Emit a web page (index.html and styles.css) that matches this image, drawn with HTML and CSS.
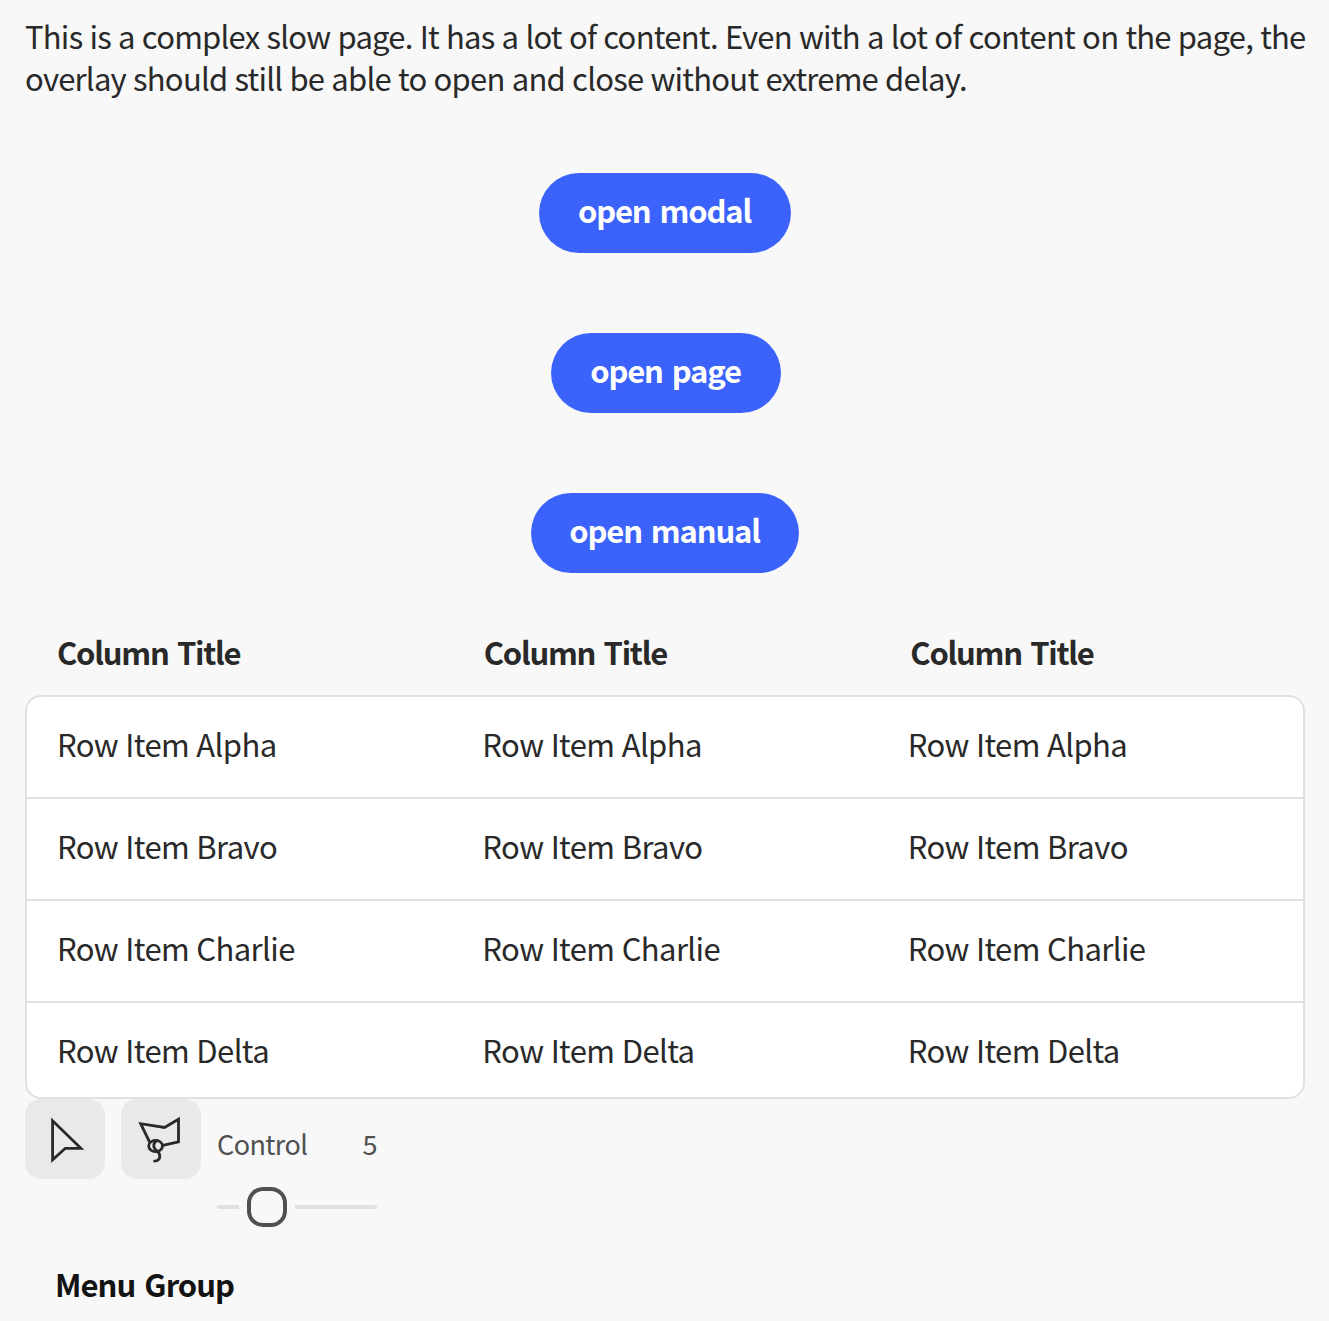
FILE: index.html
```html
<!DOCTYPE html>
<html lang="en">
<head>
<meta charset="utf-8">
<title>Complex slow page</title>
<link rel="stylesheet" href="styles.css">
</head>
<body>
<main class="page">
  <p class="intro"><span class="intro-line">This is a complex slow page. It has a lot of content. Even with a lot of content on the page, the</span> <span class="intro-line">overlay should still be able to open and close without extreme delay.</span></p>
  <div class="actions">
    <button class="button button-modal">open modal</button>
    <button class="button button-page">open page</button>
    <button class="button button-manual">open manual</button>
  </div>
  <section class="table">
    <div class="table-head"><span>Column Title</span><span>Column Title</span><span>Column Title</span></div>
    <div class="table-body">
      <div class="table-row"><span>Row Item Alpha</span><span>Row Item Alpha</span><span>Row Item Alpha</span></div>
      <div class="table-row"><span>Row Item Bravo</span><span>Row Item Bravo</span><span>Row Item Bravo</span></div>
      <div class="table-row"><span>Row Item Charlie</span><span>Row Item Charlie</span><span>Row Item Charlie</span></div>
      <div class="table-row"><span>Row Item Delta</span><span>Row Item Delta</span><span>Row Item Delta</span></div>
    </div>
  </section>
  <div class="tools">
    <button class="tool" aria-label="Select"><svg viewBox="0 0 80 80"><path d="M27.6 21.8V60.9L40.3 49.3H55.9Z"/></svg></button>
    <button class="tool" aria-label="Lasso"><svg viewBox="0 0 80 80"><path d="M28.6 43.2 19.7 24.7l23.8 3.8L57.5 20.3v22.6L41.8 46.4"/><ellipse cx="34.6" cy="47" rx="6.9" ry="5.7"/><path stroke-linecap="round" d="M36.2 41.6c-3.6 1.2-4.6 6.4-1.6 9.2 1.6 1.3 4.1 3.2 4.2 6.2.2 3.2-2.2 5.2-5.2 5.2"/></svg></button>
    <div class="slider">
      <div class="slider-label"><span>Control</span><span>5</span></div>
      <div class="slider-control"><i class="track track-start"></i><i class="handle"></i><i class="track track-end"></i></div>
    </div>
  </div>
  <h2 class="menu-heading">Menu Group</h2>
</main>
</body>
</html>
```
FILE: styles.css
```css
* { box-sizing: border-box; }
html, body { height: 100%; }
body {
  margin: 0;
  overflow: hidden;
  background: #f8f8f8;
  color: #292929;
  font: 31px/42px "Noto Sans CJK SC", "Open Sans", sans-serif;
  letter-spacing: -0.6px;
  word-spacing: 0.9px;
}
button { border: 0; font: inherit; }
.page { padding: 15px 24px 0 25px; }
.intro { margin: 0; letter-spacing: -0.76px; }
.intro-line { display: block; white-space: nowrap; }
.actions {
  display: flex;
  flex-direction: column;
  align-items: center;
  gap: 80px;
  padding: 74px 0 40px;
}
.button {
  height: 80px;
  padding: 0 1px 6px 0;
  border-radius: 40px;
  background: #3b63fb;
  color: #fff;
  font-weight: 700;
  letter-spacing: -1.15px;
  word-spacing: 3px;
  white-space: nowrap;
}
.button-modal { width: 252px; }
.button-page { width: 230px; margin-left: 2px; }
.button-manual { width: 268px; }
.table-head, .table-row {
  display: grid;
  grid-template-columns: repeat(3, 1fr);
}
.table-head {
  height: 82px;
  padding-top: 18px;
  font-weight: 700;
  letter-spacing: -1.25px;
  word-spacing: 2.6px;
}
.table-head span { padding-left: 32px; }
.table-body {
  height: 404px;
  border: 2px solid #e1e1e1;
  border-radius: 16px;
  background: #fff;
  overflow: hidden;
}
.table-row { height: 102px; padding-top: 26px; border-bottom: 2px solid #e1e1e1; }
.table-row:last-child { border-bottom: 0; }
.table-row span { padding-left: 30px; }
.tools { display: flex; gap: 16px; height: 164px; }
.tool {
  width: 80px;
  height: 80px;
  padding: 0;
  border-radius: 16px;
  background: #e9e9e9;
}
.tool svg { display: block; fill: none; stroke: #292929; stroke-width: 2.8; }
.slider { width: 160px; padding-top: 24px; color: #505050; }
.slider-label {
  display: flex;
  justify-content: space-between;
  font-size: 27px;
}
.slider-control { display: flex; align-items: center; gap: 8px; height: 40px; margin-top: 22px; }
.track { height: 4px; background: #e1e1e1; }
.track-start { width: 22px; border-radius: 2px 0 0 2px; }
.track-end { flex: 1; border-radius: 0 2px 2px 0; }
.handle { width: 40px; height: 40px; border: 4px solid #505050; border-radius: 16px; }
.menu-heading {
  margin: 0;
  padding-left: 30px;
  font-size: 31px;
  line-height: 42px;
  letter-spacing: -0.95px;
  word-spacing: 3px;
  color: #131313;
}
```
